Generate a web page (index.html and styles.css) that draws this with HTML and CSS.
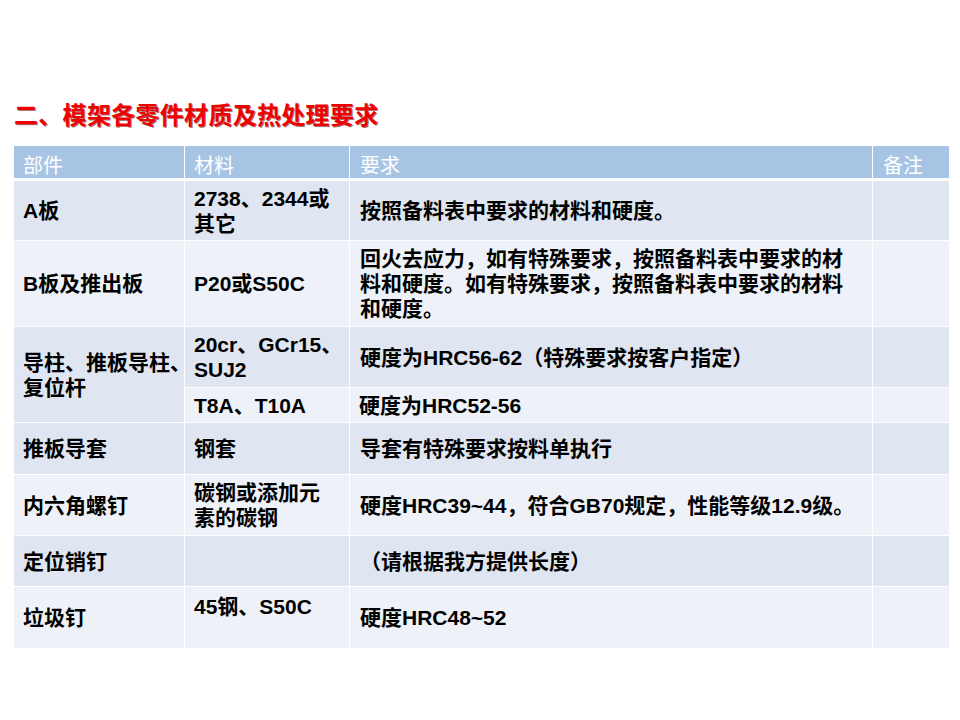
FILE: index.html
```html
<!DOCTYPE html>
<html lang="zh-CN">
<head>
<meta charset="utf-8">
<title>模架各零件材质及热处理要求</title>
<link rel="stylesheet" href="styles.css">
</head>
<body>
<div class="slide">
  <h1 class="title">二、模架各零件材质及热处理要求</h1>
  <table class="spec">
    <colgroup>
      <col class="c1"><col class="c2"><col class="c3"><col class="c4">
    </colgroup>
    <thead>
      <tr class="h-head">
        <th>部件</th><th>材料</th><th>要求</th><th class="last">备注</th>
      </tr>
    </thead>
    <tbody>
      <tr class="dark h60">
        <td>A板</td>
        <td>2738、2344或<br>其它</td>
        <td>按照备料表中要求的材料和硬度。</td>
        <td class="last"></td>
      </tr>
      <tr class="light h86">
        <td>B板及推出板</td>
        <td>P20或S50C</td>
        <td>回火去应力，如有特殊要求，按照备料表中要求的材<br>料和硬度。如有特殊要求，按照备料表中要求的材料<br>和硬度。</td>
        <td class="last"></td>
      </tr>
      <tr class="dark h61">
        <td rowspan="2" class="merged">导柱、推板导柱、<br>复位杆</td>
        <td>20cr、GCr15、<br>SUJ2</td>
        <td>硬度为HRC56-62（特殊要求按客户指定）</td>
        <td class="last"></td>
      </tr>
      <tr class="light h35">
        <td>T8A、T10A</td>
        <td>硬度为HRC52-56</td>
        <td class="last"></td>
      </tr>
      <tr class="dark h52">
        <td>推板导套</td>
        <td>钢套</td>
        <td>导套有特殊要求按料单执行</td>
        <td class="last"></td>
      </tr>
      <tr class="light h61">
        <td>内六角螺钉</td>
        <td>碳钢或添加元<br>素的碳钢</td>
        <td>硬度HRC39~44，符合GB70规定，性能等级12.9级。</td>
        <td class="last"></td>
      </tr>
      <tr class="dark h51">
        <td>定位销钉</td>
        <td></td>
        <td>（请根据我方提供长度）</td>
        <td class="last"></td>
      </tr>
      <tr class="light h62">
        <td>垃圾钉</td>
        <td class="top">45钢、S50C</td>
        <td>硬度HRC48~52</td>
        <td class="last"></td>
      </tr>
    </tbody>
  </table>
</div>
</body>
</html>
```

FILE: styles.css
```css
html, body {
  margin: 0;
  padding: 0;
  background: #ffffff;
}

.slide {
  width: 960px;
  height: 720px;
  padding: 102px 0 0 14px;
  box-sizing: border-box;
  font-family: "Liberation Sans", "Noto Sans CJK SC", sans-serif;
}

.title {
  margin: 0;
  height: 44px;
  font-size: 24px;
  line-height: 24px;
  font-weight: 700;
  color: #f00000;
  text-shadow: 1px 1px 0 rgba(90, 0, 0, 0.55);
  letter-spacing: 0.3px;
  font-family: "Noto Sans CJK SC", sans-serif;
}

.spec {
  border-collapse: separate;
  border-spacing: 0;
  table-layout: fixed;
  width: 935px;
}

.c1 { width: 171px; }
.c2 { width: 165px; }
.c3 { width: 523px; }
.c4 { width: 76px; }

.spec th,
.spec td {
  padding: 0 2px 0 9px;
  border-right: 1px solid #ffffff;
  border-bottom: 1px solid #ffffff;
  font-size: 21px;
  line-height: 25px;
  white-space: nowrap;
  vertical-align: middle;
  text-align: left;
  color: #000000;
  font-weight: 700;
  overflow: visible;
}

.spec td:nth-child(3),
.spec th:nth-child(3) {
  padding-left: 10px;
}

.spec .last {
  border-right: 0;
  padding-left: 10px;
}

.spec th {
  background: #a7c4e4;
  color: #ffffff;
  font-weight: 400;
  font-size: 20px;
  border-bottom: 3px solid #ffffff;
  padding-top: 5px;
  font-family: "Noto Sans CJK SC", sans-serif;
}

.h-head { height: 35px; }
.h35 { height: 35px; }
.h51 { height: 51px; }
.h52 { height: 52px; }
.h60 { height: 60px; }
.h61 { height: 61px; }
.h62 { height: 62px; }
.h86 { height: 86px; }

.dark td { background: #dfe6f2; }
.light td { background: #eef2f8; }

.spec td.top {
  vertical-align: top;
  padding-top: 7px;
}
```
